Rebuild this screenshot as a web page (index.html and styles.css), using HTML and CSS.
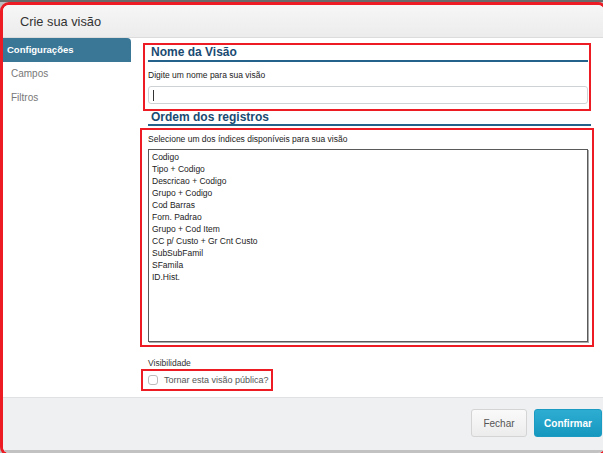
FILE: index.html
```html
<!DOCTYPE html>
<html lang="pt">
<head>
  <meta charset="UTF-8" />
  <title>Crie sua visão</title>
  <link rel="stylesheet" href="styles.css">
</head>
<body>
  <div class="modal">
    <div class="modal-header">Crie sua visão</div>
    <div class="modal-body">
      <ul class="tabs">
        <li class="tab active">Configurações</li>
        <li class="tab">Campos</li>
        <li class="tab">Filtros</li>
      </ul>
      <div class="content">
        <div class="mark mark-name">
          <h3 class="section-title">Nome da Visão</h3>
          <label class="hint" for="viewName">Digite um nome para sua visão</label>
          <div class="text-input" id="viewName"><span class="caret"></span></div>
        </div>
        <h3 class="section-title order-title">Ordem dos registros</h3>
        <div class="mark mark-order">
          <div class="hint">Selecione um dos índices disponíveis para sua visão</div>
          <ul class="listbox">
            <li>Codigo</li>
            <li>Tipo + Codigo</li>
            <li>Descricao + Codigo</li>
            <li>Grupo + Codigo</li>
            <li>Cod Barras</li>
            <li>Forn. Padrao</li>
            <li>Grupo + Cod Item</li>
            <li>CC p/ Custo + Gr Cnt Custo</li>
            <li>SubSubFamil</li>
            <li>SFamila</li>
            <li>ID.Hist.</li>
          </ul>
        </div>
        <div class="hint visibility">Visibilidade</div>
        <div class="mark mark-public">
          <span class="checkbox"></span>
          <span class="check-label">Tornar esta visão pública?</span>
        </div>
      </div>
    </div>
    <div class="modal-footer">
      <button class="btn">Fechar</button>
      <button class="btn btn-primary">Confirmar</button>
    </div>
  </div>
</body>
</html>
```

FILE: styles.css
```css
html, body {
  margin: 0;
  height: 100%;
  overflow: hidden;
}
body {
  font-family: "Liberation Sans", Arial, sans-serif;
  background-color: #bdbdbd;
  border-top: 2px solid #6a6a6a;
  box-sizing: border-box;
}
.modal {
  width: 607px;
  height: 454px;
  box-sizing: border-box;
  border: 3px solid #ed1c24;
  border-radius: 9px;
  background-color: #fff;
  display: flex;
  flex-direction: column;
  overflow: hidden;
}
.modal-header {
  height: 32px;
  line-height: 33px;
  padding-left: 17px;
  font-size: 12.8px;
  color: #333;
  background: linear-gradient(#f6f6f6, #ececec);
  border-bottom: 1px solid #dcdcdc;
}
.modal-body {
  height: 359px;
  display: flex;
}
.tabs {
  list-style: none;
  margin: 0;
  padding: 0;
  width: 128px;
}
.tab {
  height: 24px;
  line-height: 24px;
  padding-left: 8px;
  font-size: 10px;
  color: #777;
}
.tab.active {
  padding-left: 4px;
  background-color: #3a7797;
  color: #fff;
  font-size: 9.5px;
  font-weight: bold;
  border-top-right-radius: 4px;
}
.content {
  flex: 1;
  padding-top: 5px;
}
.mark {
  border: 2px solid #ed1c24;
  box-sizing: border-box;
}
.mark-name {
  margin-left: 12px;
  width: 448px;
  height: 68px;
  padding: 0 1px 0 3px;
}
.section-title {
  margin: 0;
  padding-left: 3px;
  font-size: 12px;
  line-height: 15px;
  color: #1a4a72;
  border-bottom: 2px solid #24628c;
}
.hint {
  font-size: 8.5px;
  line-height: 12px;
  color: #222;
}
.mark-name .hint {
  display: block;
  margin-top: 7px;
}
.text-input {
  margin-top: 5px;
  height: 18px;
  box-sizing: border-box;
  border: 1px solid #cfd2d4;
  border-radius: 3px;
  padding: 3px 4px;
}
.caret {
  display: block;
  width: 1px;
  height: 11px;
  background-color: #333;
}
.order-title {
  margin-left: 17px;
  width: 440px;
  line-height: 13px;
}
.mark-order {
  margin-top: 2px;
  margin-left: 9px;
  width: 454px;
  height: 219px;
  padding: 3px 0 0 6px;
}
.listbox {
  list-style: none;
  margin: 4px 0 0;
  padding: 1px 0 0 3px;
  width: 440px;
  height: 193px;
  box-sizing: border-box;
  border: 1px solid #5a5a5a;
  box-shadow: 1px 1px 0 #aaa;
}
.listbox li {
  font-size: 8.5px;
  line-height: 12px;
  color: #222;
}
.visibility {
  margin: 10px 0 0 17px;
  color: #333;
}
.mark-public {
  margin-left: 10px;
  width: 132px;
  height: 22px;
  display: flex;
  align-items: center;
  gap: 6px;
  padding-left: 5px;
}
.checkbox {
  width: 10px;
  height: 10px;
  flex-shrink: 0;
  box-sizing: border-box;
  border: 1px solid #bbb;
  border-radius: 3px;
}
.check-label {
  font-size: 9px;
  color: #555;
  white-space: nowrap;
}
.modal-footer {
  flex: 1;
  display: flex;
  justify-content: flex-end;
  align-items: flex-start;
  gap: 7px;
  padding: 11px 2px 0 0;
  background-color: #eef0f1;
  border-top: 1px solid #dfe1e2;
  border-bottom: 3px solid #c2c2c2;
}
.btn {
  height: 28px;
  width: 56px;
  padding: 0;
  border: 1px solid #d4d4d4;
  border-radius: 3px;
  background: linear-gradient(#fafafa, #ececec);
  font-family: inherit;
  font-size: 10px;
  color: #555;
}
.btn-primary {
  width: 68px;
  border-color: #1b9ac2;
  background: linear-gradient(#2eadd2, #1598bf);
  color: #fff;
  font-weight: bold;
}
```
